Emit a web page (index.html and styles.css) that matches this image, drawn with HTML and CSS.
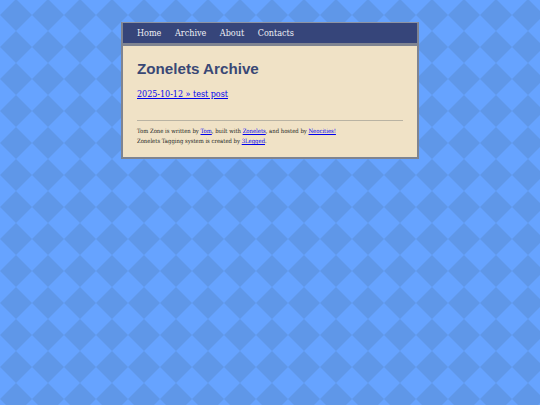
FILE: index.html
```html
<!DOCTYPE html>
<html lang="en">
<head>
<meta charset="UTF-8" />
<meta name="viewport" content="width=device-width, initial-scale=1" />
<title>Zonelets Archive</title>
<link rel="stylesheet" href="styles.css">
</head>
<body>

<div class="container">
  <nav class="nav">
    <a href="#">Home</a>
    <a href="#">Archive</a>
    <a href="#">About</a>
    <a href="#">Contacts</a>
  </nav>

  <main class="content">
    <h1>Zonelets Archive</h1>
    <ul class="posts">
      <li><a href="#">2025-10-12 » test post</a></li>
    </ul>

    <footer class="footer">
      <p>Tom Zone is written by <a href="#">Tom</a>, built with <a href="#">Zonelets</a>, and hosted by <a href="#">Neocities!</a></p>
      <p>Zonelets Tagging system is created by <a href="#">3Legged</a>.</p>
    </footer>
  </main>
</div>

</body>
</html>
```
FILE: styles.css
```css
html, body {
  margin: 0;
  height: 100%;
}
body {
  font-family: "DejaVu Serif", serif;
  font-stretch: condensed;
  background-color: #66a3ff;
  background-image: url("data:image/svg+xml,%3Csvg xmlns='http://www.w3.org/2000/svg' width='32' height='32'%3E%3Cpath d='M16 0L32 16L16 32L0 16Z' fill='%235f97e8'/%3E%3C/svg%3E");
  background-size: 32px 32px;
  background-position: 0 -1px;
  overflow: hidden;
}
.container {
  width: 294px;
  margin: 22px auto 0;
  border: 2px solid #7f8491;
  border-top: 1px solid #8d93a3;
}
.nav {
  display: flex;
  gap: 13.5px;
  height: 20px;
  padding: 0 14px;
  align-items: center;
  background: #36457a;
  border-bottom: 3px solid #7f8491;
}
.nav a {
  color: #eef0f5;
  font-size: 9px;
  text-decoration: none;
}
.content {
  padding: 14px 14px 11px;
  background: #f0e2c6;
}
h1 {
  margin: 0;
  color: #3a4875;
  font-family: "Liberation Sans", sans-serif;
  font-stretch: normal;
  font-size: 15.2px;
  line-height: 18px;
}
.posts {
  margin: 9px 0 0;
  padding: 0;
  list-style: none;
  font-size: 8.9px;
  line-height: 14px;
}
.footer {
  margin-top: 19px;
  padding-top: 5px;
  border-top: 1px solid #b9b3a3;
  font-size: 5.9px;
  line-height: 10px;
  color: #222;
}
.footer p {
  margin: 0;
}
```
